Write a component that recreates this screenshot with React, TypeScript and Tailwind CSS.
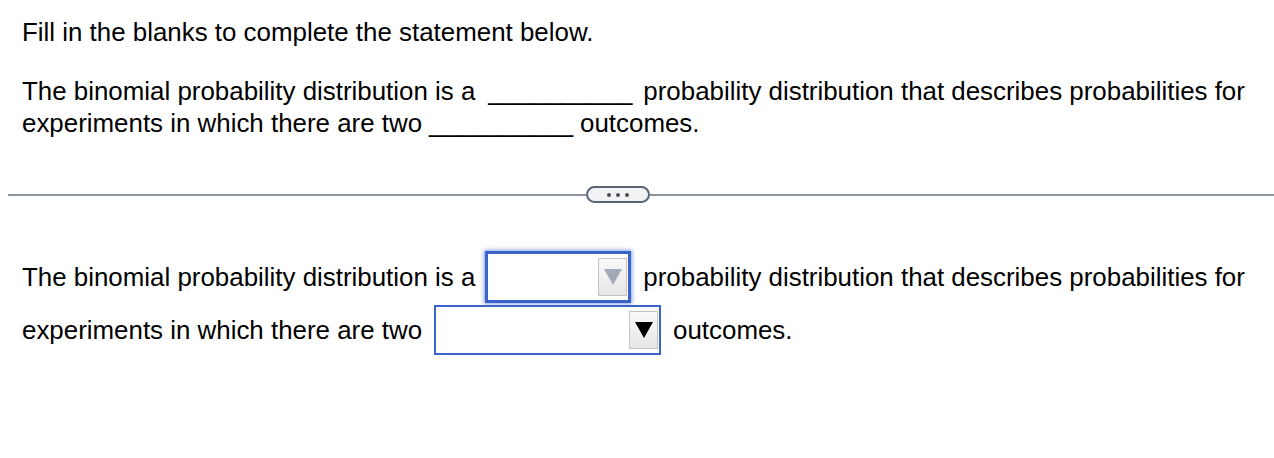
import React from "react";

const Blank = ({ ml }: { ml: string }) => <span className={ml}>__________</span>;

const Dropdown = ({ focused, width }: { focused?: boolean; width: string }) => (
  <div
    className={`flex items-center justify-end bg-white ${width} ${
      focused
        ? "h-[52px] border-[3px] border-[#3b63cc] shadow-[0_0_4px_1px_rgba(59,99,204,0.6)] pr-[1px] ml-[10px] mr-[12px]"
        : "h-[50px] border-2 border-[#3b63cc] pr-[1px] ml-[12px] mr-[12px]"
    }`}
  >
    <div className="w-[29px] h-[38px] flex items-center justify-center border border-[#c3c3c3] bg-gradient-to-b from-[#fafafa] to-[#e6e6e6]">
      <svg width="20" height="18" viewBox="0 0 20 18">
        <polygon points="1,1 19,1 10,17" fill={focused ? "#a2a9b8" : "#000"} />
      </svg>
    </div>
  </div>
);

export default function App() {
  return (
    <div className="w-[1274px] h-[458px] bg-white text-black font-['Liberation_Sans',Arial,sans-serif] text-[25.9px]">
      <div className="pl-[22px] pt-[17px]">
        <p className="leading-[30px]">Fill in the blanks to complete the statement below.</p>
        <p className="mt-[28px] leading-[32px] whitespace-nowrap">
          The binomial probability distribution is a
          <Blank ml="ml-[13px]" />
          <span className="ml-[11px]">probability distribution that describes probabilities for</span>
          <br />
          experiments in which there are two
          <Blank ml="ml-[7px]" />
          <span className="ml-[7px]">outcomes.</span>
        </p>
      </div>

      {/* separator with expander */}
      <div className="mt-[47px] ml-[8px] flex items-center">
        <div className="w-[578px] h-[2px] bg-[#8a949f]" />
        <div className="w-[64px] h-[17px] rounded-full border-2 border-[#5a6574] bg-[#f2f3f5] flex items-center justify-center gap-[5px]">
          <span className="w-[4px] h-[4px] rounded-full bg-[#4a4f57]" />
          <span className="w-[4px] h-[4px] rounded-full bg-[#4a4f57]" />
          <span className="w-[4px] h-[4px] rounded-full bg-[#4a4f57]" />
        </div>
        <div className="flex-1 h-[2px] bg-[#8a949f]" />
      </div>

      <div className="pl-[22px] mt-[48px] flex flex-col gap-[2px] whitespace-nowrap">
        <div className="flex items-center">
          <span>The binomial probability distribution is a</span>
          <Dropdown focused width="w-[146px]" />
          <span>probability distribution that describes probabilities for</span>
        </div>
        <div className="flex items-center">
          <span>experiments in which there are two</span>
          <Dropdown width="w-[227px]" />
          <span>outcomes.</span>
        </div>
      </div>
    </div>
  );
}
